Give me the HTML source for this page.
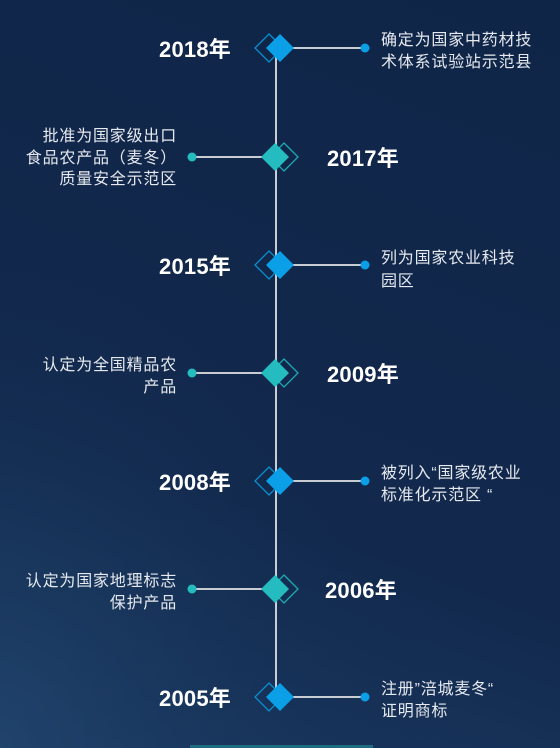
<!DOCTYPE html>
<html><head><meta charset="utf-8"><style>
html,body{margin:0;padding:0;width:560px;height:748px;overflow:hidden;}
body{background:linear-gradient(20deg,#1b3a63 0%,#12294d 35%,#0f2548 100%);}
svg{display:block}
.y{font-family:"Liberation Sans","Noto Sans CJK SC",sans-serif;font-weight:bold;font-size:22px;letter-spacing:0.2px;fill:#fff}
.t{font-family:"Liberation Sans","Noto Sans CJK SC",sans-serif;font-size:16px;letter-spacing:0.8px;fill:#e6e9ee}
</style></head><body>
<svg width="560" height="748" viewBox="0 0 560 748">
<defs>
<radialGradient id="g" cx="0" cy="1" r="0.8"><stop offset="0" stop-color="#244a72" stop-opacity="0.6"/><stop offset="1" stop-color="#0f2548" stop-opacity="0"/></radialGradient>
</defs>
<rect width="560" height="748" fill="url(#g)"/>
<line x1="276" y1="48" x2="276" y2="700" stroke="#c9ccd2" stroke-width="2"/>
<rect x="190" y="745" width="183" height="3" fill="#1f6b80"/>

<g transform="translate(0,48)">
<line x1="280" y1="0" x2="365" y2="0" stroke="#c9ccd2" stroke-width="2"/>
<circle cx="365" cy="0" r="4.5" fill="#0b9fe8"/>
<path d="M269 -14 L283 0 L269 14 L255 0Z" fill="none" stroke="#0b8fd0" stroke-width="1.3"/>
<path d="M280 -14 L294 0 L280 14 L266 0Z" fill="#0b9fe8"/>
<text class="y" x="231" y="9" text-anchor="end">2018年</text>
<text class="t" x="381" y="-3">确定为国家中药材技</text>
<text class="t" x="381" y="19">术体系试验站示范县</text>
</g>
<g transform="translate(0,157)">
<line x1="192" y1="0" x2="275" y2="0" stroke="#c9ccd2" stroke-width="2"/>
<circle cx="192" cy="0" r="4.5" fill="#25bcc0"/>
<path d="M284 -14 L298 0 L284 14 L270 0Z" fill="none" stroke="#1fa9b0" stroke-width="1.3"/>
<path d="M275 -14 L289 0 L275 14 L261 0Z" fill="#25bcc0"/>
<text class="y" x="327" y="9">2017年</text>
<text class="t" x="177" y="-16" text-anchor="end">批准为国家级出口</text>
<text class="t" x="177" y="6" text-anchor="end">食品农产品（麦冬）</text>
<text class="t" x="177" y="27" text-anchor="end">质量安全示范区</text>
</g>
<g transform="translate(0,265)">
<line x1="280" y1="0" x2="365" y2="0" stroke="#c9ccd2" stroke-width="2"/>
<circle cx="365" cy="0" r="4.5" fill="#0b9fe8"/>
<path d="M269 -14 L283 0 L269 14 L255 0Z" fill="none" stroke="#0b8fd0" stroke-width="1.3"/>
<path d="M280 -14 L294 0 L280 14 L266 0Z" fill="#0b9fe8"/>
<text class="y" x="231" y="9" text-anchor="end">2015年</text>
<text class="t" x="381" y="-2">列为国家农业科技</text>
<text class="t" x="381" y="21">园区</text>
</g>
<g transform="translate(0,373)">
<line x1="192" y1="0" x2="275" y2="0" stroke="#c9ccd2" stroke-width="2"/>
<circle cx="192" cy="0" r="4.5" fill="#25bcc0"/>
<path d="M284 -14 L298 0 L284 14 L270 0Z" fill="none" stroke="#1fa9b0" stroke-width="1.3"/>
<path d="M275 -14 L289 0 L275 14 L261 0Z" fill="#25bcc0"/>
<text class="y" x="327" y="9">2009年</text>
<text class="t" x="177" y="-3" text-anchor="end">认定为全国精品农</text>
<text class="t" x="177" y="19" text-anchor="end">产品</text>
</g>
<g transform="translate(0,481)">
<line x1="280" y1="0" x2="365" y2="0" stroke="#c9ccd2" stroke-width="2"/>
<circle cx="365" cy="0" r="4.5" fill="#0b9fe8"/>
<path d="M269 -14 L283 0 L269 14 L255 0Z" fill="none" stroke="#0b8fd0" stroke-width="1.3"/>
<path d="M280 -14 L294 0 L280 14 L266 0Z" fill="#0b9fe8"/>
<text class="y" x="231" y="9" text-anchor="end">2008年</text>
<text class="t" x="381" y="-3">被列入“国家级农业</text>
<text class="t" x="381" y="19">标准化示范区 “</text>
</g>
<g transform="translate(0,589)">
<line x1="192" y1="0" x2="275" y2="0" stroke="#c9ccd2" stroke-width="2"/>
<circle cx="192" cy="0" r="4.5" fill="#25bcc0"/>
<path d="M284 -14 L298 0 L284 14 L270 0Z" fill="none" stroke="#1fa9b0" stroke-width="1.3"/>
<path d="M275 -14 L289 0 L275 14 L261 0Z" fill="#25bcc0"/>
<text class="y" x="325" y="9">2006年</text>
<text class="t" x="177" y="-3" text-anchor="end">认定为国家地理标志</text>
<text class="t" x="177" y="19" text-anchor="end">保护产品</text>
</g>
<g transform="translate(0,697)">
<line x1="280" y1="0" x2="365" y2="0" stroke="#c9ccd2" stroke-width="2"/>
<circle cx="365" cy="0" r="4.5" fill="#0b9fe8"/>
<path d="M269 -14 L283 0 L269 14 L255 0Z" fill="none" stroke="#0b8fd0" stroke-width="1.3"/>
<path d="M280 -14 L294 0 L280 14 L266 0Z" fill="#0b9fe8"/>
<text class="y" x="231" y="9" text-anchor="end">2005年</text>
<text class="t" x="381" y="-3">注册”涪城麦冬“</text>
<text class="t" x="381" y="19">证明商标</text>
</g>
</svg>
</body></html>
